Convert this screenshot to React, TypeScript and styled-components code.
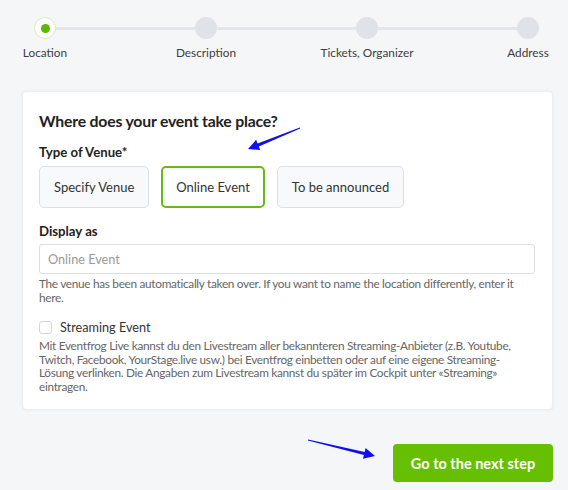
import React from "react";
import styled, { createGlobalStyle } from "styled-components";

const Global = createGlobalStyle`
  html, body { margin: 0; padding: 0; }
  body {
    background: #f5f6f8;
    font-family: "Lato", "Liberation Sans", sans-serif;
    color: #333;
    width: 568px;
    height: 490px;
    overflow: hidden;
  }
`;

const Page = styled.div`
  position: relative;
  width: 568px;
  height: 490px;
  box-sizing: border-box;
  padding: 17px 15px 0 22px;
`;

const Stepper = styled.div`
  position: relative;
  display: flex;
  justify-content: space-between;
  padding: 0 14px 0 12px;
  height: 74px;
  &::before {
    content: "";
    position: absolute;
    left: 23px;
    right: 25px;
    top: 10px;
    height: 3px;
    background: #e3e5ea;
  }
`;

const Step = styled.div`
  position: relative;
  width: 22px;
  display: flex;
  flex-direction: column;
  align-items: center;
`;

const Dot = styled.div<{ $active?: boolean }>`
  width: 22px;
  height: 22px;
  border-radius: 50%;
  box-sizing: border-box;
  background: ${(p) => (p.$active ? "#fff" : "#dfe2e7")};
  border: ${(p) => (p.$active ? "1px solid #d6ecbd" : "none")};
  display: flex;
  align-items: center;
  justify-content: center;
  &::after {
    content: "";
    display: ${(p) => (p.$active ? "block" : "none")};
    width: 9px;
    height: 9px;
    border-radius: 50%;
    background: #5cb800;
  }
`;

const StepLabel = styled.div`
  margin-top: 6px;
  font-size: 11.8px;
  line-height: 16px;
  color: #3d3d3d;
  white-space: nowrap;
`;

const Card = styled.div`
  background: #fff;
  border-radius: 4px;
  box-shadow: 0 0 2px rgba(0, 0, 0, 0.08);
  border: 1px solid #eceef1;
  padding: 18px 17px 15px 16px;
  height: 319px;
  box-sizing: border-box;
`;

const Title = styled.h2`
  margin: 0;
  font-size: 15.8px;
  letter-spacing: -0.2px;
  font-weight: 700;
  color: #222;
  line-height: 22px;
`;

const Label = styled.div<{ $top: number }>`
  margin-top: ${(p) => p.$top}px;
  font-size: 13.2px;
  font-weight: 700;
  color: #222;
  line-height: 18px;
`;

const Options = styled.div`
  display: flex;
  gap: 12px;
  margin-top: 5px;
`;

const Option = styled.button<{ $selected?: boolean }>`
  height: 42px;
  box-sizing: border-box;
  padding: 0 ${(p) => (p.$selected ? "13px" : "14px")};
  font-family: inherit;
  font-size: 13px;
  color: #333;
  background: ${(p) => (p.$selected ? "#fff" : "#f8f9fb")};
  border: ${(p) => (p.$selected ? "2px solid #66bb1a" : "1px solid #dcdfe4")};
  border-radius: 5px;
`;

const Input = styled.div`
  margin-top: 4px;
  height: 30px;
  box-sizing: border-box;
  border: 1px solid #dcdfe4;
  border-radius: 3px;
  padding: 0 8px;
  display: flex;
  align-items: center;
  font-size: 12.7px;
  color: #9a9a9a;
`;

const Help = styled.p`
  margin: 3px 0 0;
  font-size: 11.8px;
  letter-spacing: -0.3px;
  line-height: 13.5px;
  color: #666;
  white-space: nowrap;
`;

const CheckRow = styled.label`
  display: flex;
  align-items: center;
  gap: 8px;
  margin-top: 14px;
  font-size: 12.7px;
  color: #333;
  line-height: 18px;
`;

const Box = styled.span`
  width: 13px;
  height: 13px;
  box-sizing: border-box;
  border: 1px solid #d3d6db;
  border-radius: 3px;
  background: #fff;
`;

const Footer = styled.div`
  display: flex;
  justify-content: flex-end;
  margin-top: 34px;
`;

const Next = styled.button`
  width: 160px;
  height: 38px;
  border: none;
  border-radius: 4px;
  background: #66bf00;
  color: #fff;
  font-family: inherit;
  font-size: 14.5px;
  font-weight: 700;
`;

const Overlay = styled.svg`
  position: absolute;
  left: 0;
  top: 0;
  pointer-events: none;
`;

function Arrow({ x1, y1, x2, y2 }: { x1: number; y1: number; x2: number; y2: number }) {
  const dx = x2 - x1;
  const dy = y2 - y1;
  const len = Math.hypot(dx, dy);
  const ux = dx / len;
  const uy = dy / len;
  const px = -uy;
  const py = ux;
  const hl = 11;
  const hw = 5.5;
  const bx = x2 - ux * hl;
  const by = y2 - uy * hl;
  const tail = 0.6;
  const neck = 1.6;
  const pts = [
    [x1 + px * tail, y1 + py * tail],
    [bx + px * neck, by + py * neck],
    [bx + px * hw, by + py * hw],
    [x2, y2],
    [bx - px * hw, by - py * hw],
    [bx - px * neck, by - py * neck],
    [x1 - px * tail, y1 - py * tail],
  ]
    .map((p) => p.map((v) => v.toFixed(1)).join(","))
    .join(" ");
  return <polygon points={pts} fill="#1010ee" />;
}

const steps = ["Location", "Description", "Tickets, Organizer", "Address"];

export default function App() {
  return (
    <>
      <Global />
      <Page>
        <Stepper>
          {steps.map((s, i) => (
            <Step key={s}>
              <Dot $active={i === 0} />
              <StepLabel>{s}</StepLabel>
            </Step>
          ))}
        </Stepper>
        <Card>
          <Title>Where does your event take place?</Title>
          <Label $top={11}>Type of Venue*</Label>
          <Options>
            <Option>Specify Venue</Option>
            <Option $selected>Online Event</Option>
            <Option>To be announced</Option>
          </Options>
          <Label $top={14}>Display as</Label>
          <Input>Online Event</Input>
          <Help>
            The venue has been automatically taken over. If you want to name the location differently, enter it
            <br />
            here.
          </Help>
          <CheckRow>
            <Box />
            Streaming Event
          </CheckRow>
          <Help>
            Mit Eventfrog Live kannst du den Livestream aller bekannteren Streaming-Anbieter (z.B. Youtube,
            <br />
            Twitch, Facebook, YourStage.live usw.) bei Eventfrog einbetten oder auf eine eigene Streaming-
            <br />
            Lösung verlinken. Die Angaben zum Livestream kannst du später im Cockpit unter «Streaming»
            <br />
            eintragen.
          </Help>
        </Card>
        <Footer>
          <Next>Go to the next step</Next>
        </Footer>
        <Overlay width="568" height="490" viewBox="0 0 568 490">
          <Arrow x1={300} y1={128} x2={248} y2={149} />
          <Arrow x1={308} y1={440} x2={375} y2={456} />
        </Overlay>
      </Page>
    </>
  );
}
